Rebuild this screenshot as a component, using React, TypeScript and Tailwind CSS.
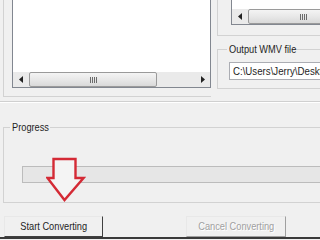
import React from 'react';

const uiFont = "font-['Liberation_Sans',Arial,sans-serif]";

function Arrow({ dir }: { dir: 'left' | 'right' }) {
  return (
    <div className="w-[15px] h-full flex items-center justify-center shrink-0">
      <svg width="4" height="7" viewBox="0 0 4 7">
        {dir === 'left' ? <path d="M4 0 L0 3.5 L4 7 Z" fill="#222" /> : <path d="M0 0 L4 3.5 L0 7 Z" fill="#222" />}
      </svg>
    </div>
  );
}

function Grip() {
  return (
    <div className="flex gap-[1px]">
      <div className="w-[1px] h-[6px] bg-[#6b6b6b]" />
      <div className="w-[1px] h-[6px] bg-[#6b6b6b]" />
      <div className="w-[1px] h-[6px] bg-[#6b6b6b]" />
      <div className="w-[1px] h-[6px] bg-[#6b6b6b]" />
    </div>
  );
}

function Thumb({ width, offset }: { width: number; offset: string }) {
  return (
    <div
      className={`${offset} h-[15px] shrink-0 rounded-[2px] border border-[#9a9a9a] bg-gradient-to-b from-[#f4f4f4] via-[#e8e8e8] to-[#d9d9d9] flex items-center justify-center`}
      style={{ width }}
    >
      <Grip />
    </div>
  );
}

// narrow system-like text
function Narrow({ children, center }: { children: React.ReactNode; center?: boolean }) {
  return (
    <span className={`inline-block whitespace-nowrap scale-x-[0.84] ${center ? 'origin-center' : 'origin-left'}`}>
      {children}
    </span>
  );
}

export default function App() {
  return (
    <div className={`relative w-[320px] h-[240px] overflow-hidden bg-[#f0f0f0] text-[11px] text-[#1e1e1e] ${uiFont}`}>
      {/* top area */}
      <div className="flex h-[97px]">
        <div className="ml-[3px] w-[212px] h-[97px] border-l border-b border-[#d2d2d2] pl-[8px]">
          <div className="w-[199px] h-[88px] bg-white border-l border-r border-b border-[#828790] flex flex-col justify-end">
            <div className="flex h-[15px] bg-[#eaeaea]">
              <Arrow dir="left" />
              <Thumb width={128} offset="ml-[1px]" />
              <div className="flex-1" />
              <Arrow dir="right" />
            </div>
          </div>
        </div>

        <div className="ml-[6px] w-[130px] shrink-0 flex flex-col">
          <div className="h-[36px] border-l border-b border-[#d2d2d2] pl-[13px]">
            <div className="h-[25px] bg-white border-l border-b border-[#828790] flex flex-col justify-end">
              <div className="flex h-[15px] bg-[#eaeaea]">
                <Arrow dir="left" />
                <Thumb width={110} offset="ml-[1px]" />
              </div>
            </div>
          </div>

          <fieldset className="mt-[7px] border border-[#d2d2d2] pl-[11px] pb-[8px]">
            <legend className="-ml-[2px] px-[2px] w-[62px] leading-[13px] font-normal overflow-visible">
              <Narrow>Output WMV file</Narrow>
            </legend>
            <div className="mt-[6px] h-[18px] bg-white border border-[#abadb3] pl-[3px] leading-[16px] overflow-hidden">
              <span className="inline-block whitespace-nowrap scale-x-[0.88] origin-left">C:\Users\Jerry\Desktop</span>
            </div>
          </fieldset>
        </div>
      </div>

      {/* separator */}
      <div className="mt-[4px] h-[1px] bg-[#d0d0d0]" />
      <div className="h-[1px] bg-white" />

      {/* progress */}
      <fieldset className="mt-[18px] ml-[3px] w-[340px] border border-[#d2d2d2] pl-[18px] pb-[19px]">
        <legend className="-ml-[12px] px-[2px] w-[40px] leading-[13px] font-normal overflow-visible">
          <Narrow>Progress</Narrow>
        </legend>
        <div className="mt-[32px] h-[17px] border border-[#bcbcbc] bg-[#e6e6e6]" />
      </fieldset>

      {/* buttons */}
      <div className="mt-[13px] flex">
        <button className="ml-[4px] w-[99px] h-[21px] bg-[#f0f0f0] border border-t-[#e8e8e8] border-l-[#e8e8e8] border-r-[#404040] border-b-[#404040] leading-[19px]">
          <Narrow center>Start Converting</Narrow>
        </button>
        <button
          disabled
          className="ml-[83px] w-[100px] h-[21px] bg-[#f0f0f0] border border-t-[#e8e8e8] border-l-[#e8e8e8] border-r-[#a0a0a0] border-b-[#a0a0a0] text-[#a0a0a0] leading-[19px] [text-shadow:1px_1px_0_#ffffff]"
        >
          <Narrow center>Cancel Converting</Narrow>
        </button>
      </div>
      <div className="h-[2px] bg-[#3a3a3a]" />

      {/* red annotation arrow */}
      <svg className="absolute left-[46px] top-[157px]" width="40" height="46" viewBox="0 0 40 46">
        <path
          d="M7.5 2 L29.5 2 L29.5 21 L37.5 21 L18.5 43 L1.5 21 L7.5 21 Z"
          fill="#f4f4f4"
          stroke="#d42a35"
          strokeWidth="2.4"
          strokeLinejoin="miter"
        />
      </svg>
    </div>
  );
}
